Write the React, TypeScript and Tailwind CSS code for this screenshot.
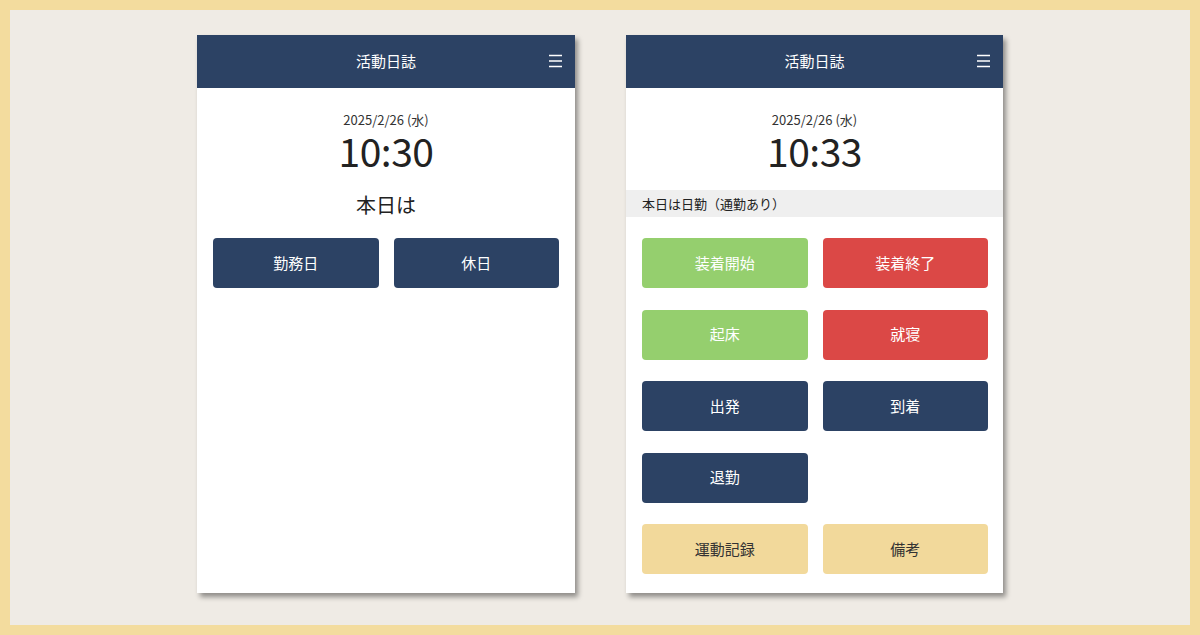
import React from 'react';

const font = { fontFamily: '"Noto Sans CJK JP", "Noto Sans", sans-serif' };

const Menu: React.FC = () => (
  <svg width="15" height="14" viewBox="0 0 15 14" className="absolute right-[12px] top-[19px]">
    <path d="M1 1.5h13M1 7h13M1 12.5h13" stroke="#fff" strokeWidth="1.5" />
  </svg>
);

const Header: React.FC = () => (
  <div className="relative flex h-[53px] items-center justify-center bg-[#2c4264] text-[15px] text-white">
    活動日誌
    <Menu />
  </div>
);

const Clock: React.FC<{ time: string }> = ({ time }) => (
  <div className="flex flex-col items-center pt-[23px] text-[#222]">
    <div className="text-[13px] leading-[17px] text-[#333]">2025/2/26 (水)</div>
    <div className="mt-[1px] text-[39px] leading-[43px] tracking-[-0.5px]">{time}</div>
  </div>
);

const tones: Record<string, string> = {
  navy: 'bg-[#2c4264] text-white',
  green: 'bg-[#95cf6e] text-white',
  red: 'bg-[#db4846] text-white',
  yellow: 'bg-[#f2d99b] text-[#333]',
};

const Btn: React.FC<{ label: string; tone: string }> = ({ label, tone }) => (
  <div className={`flex h-[50px] items-center justify-center rounded-[4px] text-[15px] ${tones[tone]}`}>
    {label}
  </div>
);

const actions = [
  { label: '装着開始', tone: 'green' },
  { label: '装着終了', tone: 'red' },
  { label: '起床', tone: 'green' },
  { label: '就寝', tone: 'red' },
  { label: '出発', tone: 'navy' },
  { label: '到着', tone: 'navy' },
  { label: '退勤', tone: 'navy' },
  { label: '', tone: '' },
  { label: '運動記録', tone: 'yellow' },
  { label: '備考', tone: 'yellow' },
];

const App: React.FC = () => {
  return (
    <div className="h-[635px] w-[1200px] border-[10px] border-[#f3dc9e] bg-[#efebe5]" style={font}>
      <div className="flex justify-center gap-[51px] pt-[25px]">
        <div className="h-[558px] w-[378px] bg-white shadow-[3px_4px_5px_rgba(0,0,0,0.4)]">
          <Header />
          <Clock time="10:30" />
          <div className="mt-[20px] text-center text-[20px] leading-[26px] text-[#222]">本日は</div>
          <div className="mt-[20px] grid grid-cols-2 gap-[15px] px-[16px]">
            <Btn label="勤務日" tone="navy" />
            <Btn label="休日" tone="navy" />
          </div>
        </div>

        <div className="h-[558px] w-[377px] bg-white shadow-[3px_4px_5px_rgba(0,0,0,0.4)]">
          <Header />
          <Clock time="10:33" />
          <div className="mt-[18px] flex h-[27px] items-center bg-[#efefef] px-[16px] text-[13px] text-[#222]">
            本日は日勤（通勤あり）
          </div>
          <div className="mt-[21px] grid grid-cols-2 gap-x-[15px] gap-y-[21.5px] pl-[16px] pr-[15px]">
            {actions.map((a, i) =>
              a.label ? <Btn key={i} label={a.label} tone={a.tone} /> : <div key={i} />
            )}
          </div>
        </div>
      </div>
    </div>
  );
};

export default App;
